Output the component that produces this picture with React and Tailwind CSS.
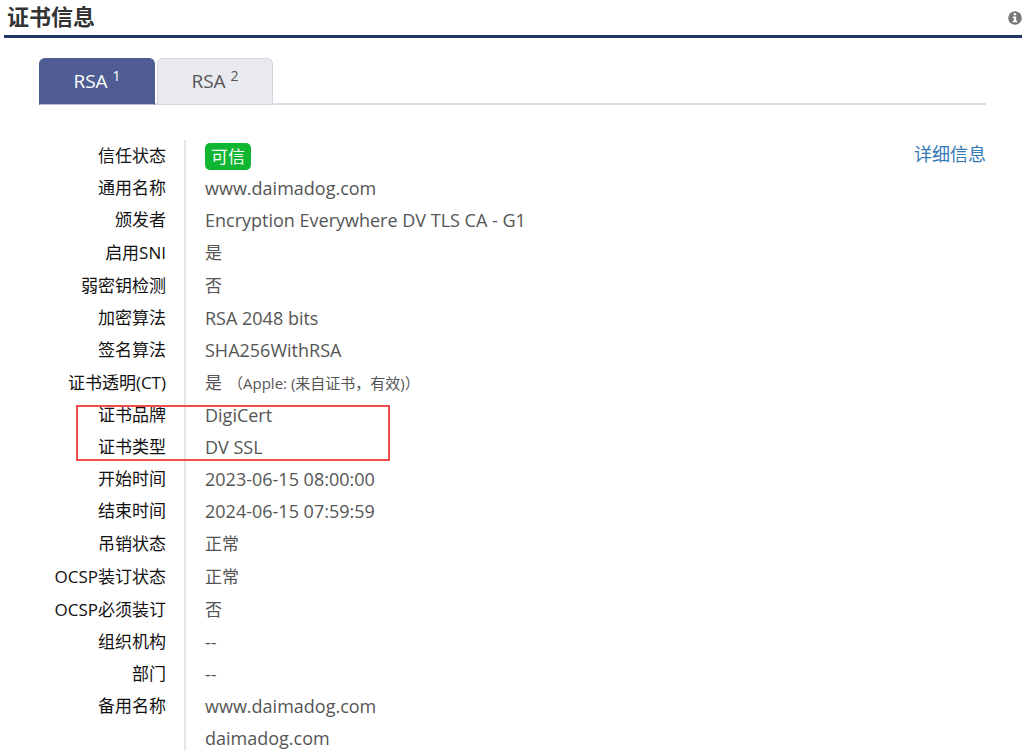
import React, { useState } from "react";

const groups = [
  {
    rows: [
      ["信任状态", { badge: "可信" }],
      ["通用名称", "www.daimadog.com"],
      ["颁发者", "Encryption Everywhere DV TLS CA - G1"],
      ["启用SNI", { zh: "是" }],
      ["弱密钥检测", { zh: "否" }],
      ["加密算法", "RSA 2048 bits"],
      ["签名算法", "SHA256WithRSA"],
      ["证书透明(CT)", { zh: "是", note: "（Apple: (来自证书，有效)）" }],
    ],
  },
  {
    outlined: true,
    rows: [
      ["证书品牌", "DigiCert"],
      ["证书类型", "DV SSL"],
    ],
  },
  {
    rows: [
      ["开始时间", "2023-06-15 08:00:00"],
      ["结束时间", "2024-06-15 07:59:59"],
      ["吊销状态", { zh: "正常" }],
      ["OCSP装订状态", { zh: "正常" }],
      ["OCSP必须装订", { zh: "否" }],
      ["组织机构", "--"],
      ["部门", "--"],
      ["备用名称", "www.daimadog.com"],
      ["", "daimadog.com"],
    ],
  },
];

function Value({ value }) {
  if (typeof value === "string") return value;
  if (value.badge) {
    return (
      <span className="flex">
        <span className="rounded-[5px] bg-[#10b632] px-1.5 text-[17px] leading-[27px] text-white">
          {value.badge}
        </span>
      </span>
    );
  }
  return (
    <span className="text-[17px]">
      {value.zh}
      {value.note && <span className="ml-1.5 text-[15px]">{value.note}</span>}
    </span>
  );
}

function InfoIcon() {
  return (
    <svg viewBox="0 0 14 14" className="size-3.5" aria-hidden="true">
      <circle cx="7" cy="7" r="6.8" fill="#777777" />
      <path d="M5.7 2.3h2.5v1.9H5.7zM4.8 5.4h3.4v4.4h1v1.5H4.8V9.8h1V6.9h-1z" fill="#ffffff" />
    </svg>
  );
}

export default function App() {
  const [active, setActive] = useState(1);
  return (
    <main className="min-h-screen bg-white pl-1 pr-0.5 font-['Open_Sans','Noto_Sans_CJK_SC',sans-serif] text-[#555555]">
      <header className="flex h-[38px] items-start justify-between border-b-3 border-[#213569] pl-[3px]">
        <h1 className="text-[22px] leading-8 font-bold text-[#333333]">证书信息</h1>
        <button type="button" aria-label="说明" className="mt-[11px]">
          <InfoIcon />
        </button>
      </header>

      <div className="pt-5 pr-[36px] pl-[35px]">
        <div role="tablist" className="flex gap-0.5 border-b-2 border-[#dcdce9]">
          {[1, 2].map((n) => (
            <button
              key={n}
              type="button"
              role="tab"
              aria-selected={active === n}
              onClick={() => setActive(n)}
              className={
                "-mb-0.5 h-[47px] w-[116px] rounded-t-md border text-[19px] " +
                (active === n
                  ? "border-[#4c5a91] border-b-[#b9bdd5] bg-[#4f5d94] text-white"
                  : "border-[#d3d3e2] bg-[#e9e9f0] text-[#555555]")
              }
            >
              RSA <sup className="text-[14px]">{n}</sup>
            </button>
          ))}
        </div>

        <div className="mt-[35px] flex items-start justify-between">
          <table className="h-[614px] border-collapse text-left">
            {groups.map((group, g) => (
              <tbody key={g} className="relative">
                {group.rows.map(([label, value], r) => (
                  <tr key={r}>
                    <th
                      scope="row"
                      className="w-[146px] border-r-2 border-[#e6e6e6] p-0 pr-[18px] text-right text-[17px] leading-8 font-normal whitespace-nowrap text-[#111111]"
                    >
                      {label}
                      {group.outlined && r === 0 && (
                        <span className="pointer-events-none absolute top-1.5 bottom-0.5 left-[37px] w-[314px] border-2 border-[#f24b4b]" />
                      )}
                    </th>
                    <td className="p-0 pl-[19px] text-[18px] leading-8 whitespace-nowrap">
                      <Value value={value} />
                    </td>
                  </tr>
                ))}
              </tbody>
            ))}
          </table>
          <a href="#details" className="text-[18px] leading-7 text-[#337ab7]">
            详细信息
          </a>
        </div>
      </div>
    </main>
  );
}
